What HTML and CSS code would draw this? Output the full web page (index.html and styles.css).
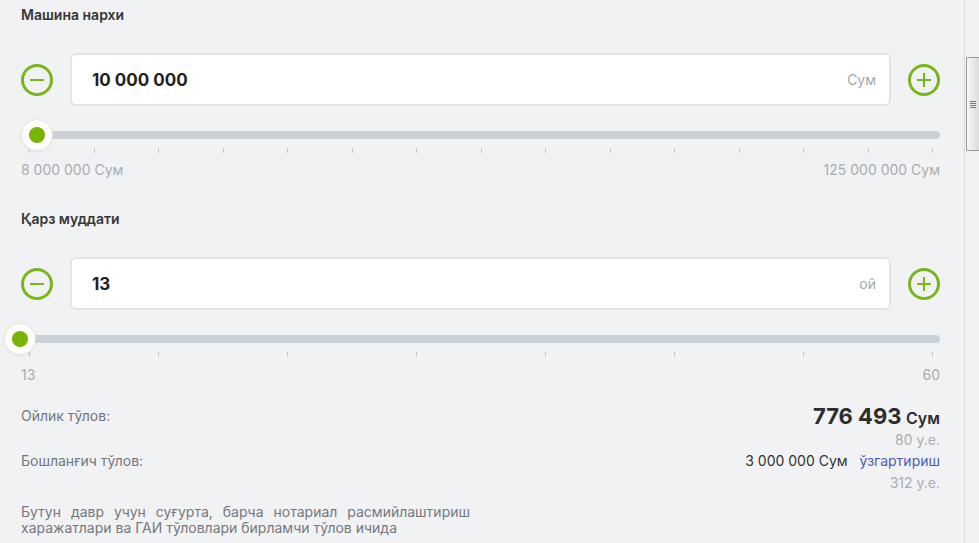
FILE: index.html
```html
<!DOCTYPE html>
<html lang="uz">
<head>
<meta charset="utf-8">
<title>Калькулятор</title>
<link rel="stylesheet" href="styles.css">
</head>
<body>
<div class="page">
  <main class="calc">
    <section class="field">
      <div class="field-label">Машина нархи</div>
      <div class="stepper">
        <button class="step-btn" aria-label="minus">
          <svg viewBox="0 0 32 32" width="32" height="32"><circle cx="16" cy="16" r="14.5" fill="none" stroke="#79b51b" stroke-width="3"/><path d="M9 16h14" stroke="#79b51b" stroke-width="2"/></svg>
        </button>
        <div class="input-box"><span class="input-value">10 000 000</span><span class="input-unit">Сум</span></div>
        <button class="step-btn" aria-label="plus">
          <svg viewBox="0 0 32 32" width="32" height="32"><circle cx="16" cy="16" r="14.5" fill="none" stroke="#79b51b" stroke-width="3"/><path d="M9 16h14M16 9v14" stroke="#79b51b" stroke-width="2"/></svg>
        </button>
      </div>
      <div class="track"><span class="thumb thumb-a"></span></div>
      <div class="ticks">
        <i></i><i></i><i></i><i></i><i></i><i></i><i></i><i></i><i></i><i></i><i></i><i></i><i></i><i></i><i></i>
      </div>
      <div class="range-labels"><span>8 000 000 Сум</span><span>125 000 000 Сум</span></div>
    </section>

    <section class="field field-2">
      <div class="field-label">Қарз муддати</div>
      <div class="stepper">
        <button class="step-btn" aria-label="minus">
          <svg viewBox="0 0 32 32" width="32" height="32"><circle cx="16" cy="16" r="14.5" fill="none" stroke="#79b51b" stroke-width="3"/><path d="M9 16h14" stroke="#79b51b" stroke-width="2"/></svg>
        </button>
        <div class="input-box"><span class="input-value">13</span><span class="input-unit">ой</span></div>
        <button class="step-btn" aria-label="plus">
          <svg viewBox="0 0 32 32" width="32" height="32"><circle cx="16" cy="16" r="14.5" fill="none" stroke="#79b51b" stroke-width="3"/><path d="M9 16h14M16 9v14" stroke="#79b51b" stroke-width="2"/></svg>
        </button>
      </div>
      <div class="track"><span class="thumb thumb-b"></span></div>
      <div class="ticks">
        <i></i><i></i><i></i><i></i><i></i><i></i><i></i><i></i>
      </div>
      <div class="range-labels"><span>13</span><span>60</span></div>
    </section>

    <section class="results">
      <div class="res-label res-label-1">Ойлик тўлов:</div>
      <div class="res-values">
        <div class="big-sum"><b>776 493</b> <span>Сум</span></div>
        <div class="ue ue-1">80 у.е.</div>
      </div>
      <div class="res-label">Бошланғич тўлов:</div>
      <div class="res-values">
        <div class="down"><span>3 000 000 Сум</span><a href="#" class="change">ўзгартириш</a></div>
        <div class="ue">312 у.е.</div>
      </div>
    </section>

    <p class="note">Бутун давр учун суғурта, барча нотариал расмийлаштириш харажатлари ва ГАИ тўловлари бирламчи тўлов ичида</p>
  </main>
  <div class="scrollbar"><div class="sb-thumb"><span class="grip"></span></div></div>
</div>
</body>
</html>
```

FILE: styles.css
```css
* { box-sizing: border-box; }
html, body { margin: 0; padding: 0; }
body {
  background: #f1f2f4;
  font-family: "Inter", "Roboto", "Liberation Sans", sans-serif;
  color: #333;
  overflow: hidden;
}
.page {
  display: flex;
  height: 543px;
}
.calc {
  width: 964px;
  padding: 0 24px 0 21px;
}
.field-label {
  margin-top: 5px;
  font-size: 14px;
  line-height: 20px;
  font-weight: 600;
  color: #363636;
}
.field-2 .field-label { margin-top: 30px; }
.stepper {
  margin-top: 28px;
  display: flex;
  align-items: center;
  gap: 17px;
}
.step-btn {
  width: 32px;
  height: 32px;
  padding: 0;
  border: 0;
  background: none;
  display: flex;
  flex: none;
}
.input-box {
  flex: 1;
  height: 53px;
  background: #fff;
  border: 2px solid #e1e4e8;
  border-radius: 6px;
  display: flex;
  align-items: center;
  justify-content: space-between;
  padding: 0 13px 0 20px;
}
.input-value {
  font-size: 17px;
  font-weight: 700;
  color: #1f1f1f;
}
.input-unit {
  font-size: 14px;
  color: #a3a7ac;
}
.track {
  position: relative;
  margin-top: 25px;
  height: 8px;
  border-radius: 4px;
  background: #ccd1d7;
}
.thumb {
  position: absolute;
  top: 50%;
  width: 32px;
  height: 32px;
  margin-top: -16px;
  border-radius: 50%;
  background: #fff;
  border: 1px solid #e6e9dc;
  box-shadow: 0 1px 3px rgba(0,0,0,0.06);
}
.thumb::after {
  content: "";
  position: absolute;
  left: 50%;
  top: 50%;
  width: 16px;
  height: 16px;
  margin: -8px 0 0 -8px;
  border-radius: 50%;
  background: #77b500;
}
.thumb-a { left: 0; }
.thumb-b { left: -17px; }
.ticks {
  margin-top: 9px;
  height: 5px;
  display: flex;
  justify-content: space-between;
  padding: 0 7px 0 8px;
}
.ticks i {
  width: 1px;
  height: 5px;
  background: #c3c7cc;
}
.range-labels {
  margin-top: 8px;
  display: flex;
  justify-content: space-between;
  font-size: 14px;
  line-height: 18px;
  color: #a8adb3;
}
.field-2 .range-labels { margin-top: 9px; }
.results {
  margin-top: 20px;
  display: grid;
  grid-template-columns: 1fr auto;
}
.res-label {
  font-size: 14px;
  line-height: 22px;
  color: #72777e;
}
.res-label-1 { line-height: 24px; }
.res-values {
  text-align: right;
}
.big-sum {
  line-height: 24px;
  color: #2d2d2d;
}
.big-sum b {
  font-size: 22px;
  font-weight: 700;
}
.big-sum span {
  font-size: 16px;
  font-weight: 600;
}
.ue {
  font-size: 14px;
  line-height: 22px;
  color: #a9adb3;
}
.ue-1 { line-height: 20px; }
.down {
  font-size: 14px;
  line-height: 22px;
  color: #333;
  display: flex;
  justify-content: flex-end;
  gap: 12px;
}
.change {
  color: #4a5cb8;
  text-decoration: none;
}
.note {
  margin: 10px 0 0;
  width: 449px;
  font-size: 14px;
  line-height: 16px;
  color: #75797f;
  text-align: justify;
}
.scrollbar {
  width: 15px;
  flex: none;
  background: #f2f2f2;
  border-left: 1px solid #dadada;
  padding-left: 1px;
}
.sb-thumb {
  margin-top: 57px;
  height: 94px;
  border: 1px solid #9a9a9a;
  border-right: 0;
  border-radius: 2px 0 0 2px;
  background: linear-gradient(to right, #f7f7f7, #dcdcdc);
  display: flex;
  align-items: center;
  justify-content: center;
}
.grip {
  width: 6px;
  height: 7px;
  background: repeating-linear-gradient(to bottom, #777 0 1px, transparent 1px 2px);
}
```
